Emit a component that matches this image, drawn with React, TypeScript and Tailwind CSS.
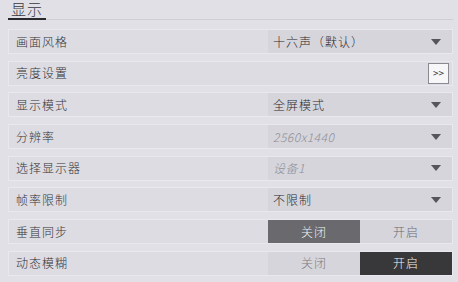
import { ReactNode } from "react";

const font = { fontFamily: '"Noto Sans CJK SC", "Liberation Sans", sans-serif' };

function Caret() {
  return (
    <svg width="10" height="6" viewBox="0 0 10 6" className="shrink-0">
      <path d="M0 0 H10 L5 6 Z" fill="#55555a" />
    </svg>
  );
}

function Row({ label, children }: { label: string; children: ReactNode }) {
  return (
    <div className="flex h-[25px] border border-[#e9e8ee] bg-[#dddce2]">
      <div className="w-[259px] shrink-0 pl-[7px] flex items-center text-[12px] font-light tracking-[1px] text-[#333337]">
        {label}
      </div>
      <div className="flex-1 flex">{children}</div>
    </div>
  );
}

function Select({ value, muted }: { value: string; muted?: boolean }) {
  return (
    <div className="flex-1 flex items-center justify-between bg-[#d6d5dc] pl-[5px] pr-[11px]">
      <span
        className={
          muted
            ? "text-[12px] font-light italic tracking-[0.5px] text-[#8e8e94]"
            : "text-[12px] font-light tracking-[1px] text-[#2a2a2e]"
        }
      >
        {value}
      </span>
      <Caret />
    </div>
  );
}

function Toggle({ on }: { on: boolean }) {
  return (
    <div className="flex-1 flex text-[12px] font-light tracking-[1px]">
      <div
        className={
          on
            ? "flex-1 flex items-center justify-center bg-[#d6d5dc] text-[#7a7a80]"
            : "flex-1 flex items-center justify-center bg-[#6a6a6e] text-[#f2f2f4]"
        }
      >
        关闭
      </div>
      <div
        className={
          on
            ? "flex-1 flex items-center justify-center bg-[#38383b] text-[#f2f2f4]"
            : "flex-1 flex items-center justify-center bg-[#d6d5dc] text-[#6a6a70]"
        }
      >
        开启
      </div>
    </div>
  );
}

export default function App() {
  return (
    <div className="w-[458px] h-[282px] overflow-hidden bg-[#e1e0e6] pl-[8px] pr-[5px]" style={font}>
      <div className="h-[20px] border-b border-[#cfced5] flex items-end">
        <div className="border-b-2 border-[#2a2a2e] mb-[-1px] px-[3px] text-[15px] font-light leading-[17px] tracking-[1px] text-[#38383e] pb-[1px]">
          显示
        </div>
      </div>
      <div className="mt-[9px] flex flex-col gap-[6.7px]">
        <Row label="画面风格">
          <Select value="十六声（默认）" />
        </Row>
        <Row label="亮度设置">
          <div className="flex-1 flex items-center justify-end pr-[3px]">
            <div className="w-[21px] h-[21px] bg-[#f7f7f9] border border-[#8a8a90] flex items-center justify-center text-[10px] text-[#333] leading-none">
              &gt;&gt;
            </div>
          </div>
        </Row>
        <Row label="显示模式">
          <Select value="全屏模式" />
        </Row>
        <Row label="分辨率">
          <Select value="2560x1440" muted />
        </Row>
        <Row label="选择显示器">
          <Select value="设备1" muted />
        </Row>
        <Row label="帧率限制">
          <Select value="不限制" />
        </Row>
        <Row label="垂直同步">
          <Toggle on={false} />
        </Row>
        <Row label="动态模糊">
          <Toggle on />
        </Row>
      </div>
    </div>
  );
}
